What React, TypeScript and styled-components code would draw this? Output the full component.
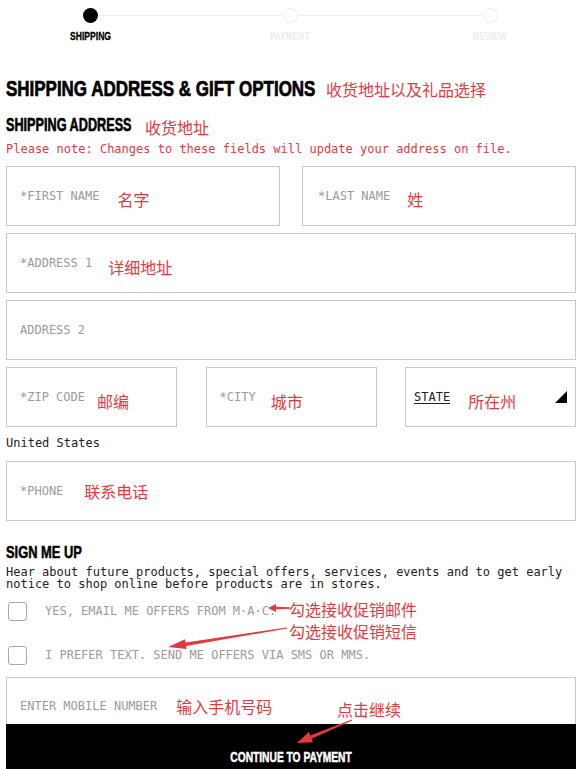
import React from "react";
import styled, { createGlobalStyle } from "styled-components";

const HEAD = `"Liberation Sans", Arial, sans-serif`;
const MONO = `"DejaVu Sans Mono", "Liberation Mono", monospace`;
const CJK = `"Noto Sans CJK SC", "Noto Sans", sans-serif`;
const RED = "#e23a3f";

const GlobalStyle = createGlobalStyle`
  html, body { margin: 0; padding: 0; background: #fff; }
  body { width: 586px; height: 769px; overflow: hidden; font-family: ${MONO}; }
  * { box-sizing: border-box; }
`;

const Page = styled.div`
  position: relative;
  width: 586px;
  height: 769px;
  overflow: hidden;
  padding: 8px 10px 0 6px;
`;

/* condensed heading text: the face is squeezed horizontally */
const Squeeze = styled.span<{ $s: number; $origin?: string; $stroke?: number }>`
  display: inline-block;
  white-space: nowrap;
  transform: scaleX(${(p) => p.$s});
  transform-origin: ${(p) => p.$origin ?? "left"} center;
  -webkit-text-stroke: ${(p) => p.$stroke ?? 0}px currentColor;
`;

/* ---------- stepper ---------- */
const Stepper = styled.div`
  position: relative;
  display: flex;
  gap: 120px;
  padding-left: 44px;
  &::before {
    content: "";
    position: absolute;
    top: 7px;
    left: 84px;
    width: 400px;
    height: 1px;
    background: #eeeeee;
  }
`;
const Step = styled.div`
  position: relative;
  width: 80px;
  display: flex;
  flex-direction: column;
  align-items: center;
  gap: 7px;
`;
const Dot = styled.div<{ $active?: boolean }>`
  width: 15px;
  height: 15px;
  border-radius: 50%;
  background: ${(p) => (p.$active ? "#000" : "#fff")};
  border: ${(p) => (p.$active ? "none" : "1.5px solid #ececec")};
`;
const StepLabel = styled.div<{ $active?: boolean; $w: number }>`
  width: ${(p) => p.$w}px;
  font-family: ${HEAD};
  font-weight: 700;
  font-size: 11px;
  line-height: 12px;
  color: ${(p) => (p.$active ? "#000" : "#ececec")};
`;

/* ---------- headings ---------- */
const TitleRow = styled.div`
  display: flex;
  align-items: baseline;
  margin-top: 34px;
`;
const Title = styled.h1`
  margin: 0;
  width: 310px;
  flex: none;
  font-family: ${HEAD};
  font-weight: 700;
  font-size: 22px;
  line-height: 26px;
  color: #000;
`;
const SubRow = styled.div`
  display: flex;
  align-items: flex-start;
  margin-top: 12px;
`;
const SubTitle = styled.h2`
  margin: 0;
  width: 126px;
  flex: none;
  font-family: ${HEAD};
  font-weight: 700;
  font-size: 18.5px;
  line-height: 22px;
  color: #000;
`;
const Anno = styled.span<{ $gap?: number; $dy?: number }>`
  margin-left: ${(p) => p.$gap ?? 0}px;
  font-family: ${CJK};
  font-weight: 400;
  font-size: 16px;
  line-height: 20px;
  color: ${RED};
  white-space: nowrap;
  transform: translateY(${(p) => p.$dy ?? 0}px);
`;
const NoteText = styled.p`
  margin: 6px 0 0;
  font-family: ${MONO};
  font-size: 12px;
  line-height: 14px;
  color: ${RED};
  white-space: nowrap;
`;

/* ---------- fields ---------- */
const Fields = styled.div`
  display: flex;
  flex-direction: column;
  gap: 7px;
  margin-top: 10px;
`;
const Grid = styled.div<{ $cols: number; $gap: number }>`
  display: grid;
  grid-template-columns: repeat(${(p) => p.$cols}, 1fr);
  column-gap: ${(p) => p.$gap}px;
`;
const Box = styled.div<{ $pl?: number }>`
  height: 60px;
  border: 1px solid #c9c9c9;
  display: flex;
  align-items: center;
  padding-left: ${(p) => p.$pl ?? 13}px;
  padding-right: 8px;
  background: #fff;
`;
const Placeholder = styled.span`
  font-family: ${MONO};
  font-size: 12px;
  line-height: 14px;
  color: #9b9b9b;
  white-space: pre;
`;
const SelectLabel = styled.span`
  font-family: ${MONO};
  font-size: 12px;
  line-height: 14px;
  color: #222;
  text-decoration: underline;
  text-underline-offset: 2px;
`;
const Caret = styled.svg`
  margin-left: auto;
  flex: none;
`;
const Country = styled.div`
  font-family: ${MONO};
  font-size: 12px;
  line-height: 14px;
  color: #222;
  margin: 2px 0 4px;
`;

/* ---------- sign up ---------- */
const SignTitle = styled.h2`
  margin: 21px 0 0;
  font-family: ${HEAD};
  font-weight: 700;
  font-size: 16.5px;
  line-height: 20px;
  color: #000;
`;
const Para = styled.p`
  margin: 4px 0 0;
  font-family: ${MONO};
  font-size: 12px;
  line-height: 12px;
  color: #222;
`;
const Options = styled.div`
  display: flex;
  flex-direction: column;
  gap: 24px;
  margin-top: 11px;
`;
const Option = styled.label`
  display: flex;
  align-items: center;
  height: 20px;
  padding-left: 2px;
`;
const Check = styled.span`
  width: 19px;
  height: 19px;
  border: 1px solid #a8a8a8;
  border-radius: 3px;
  flex: none;
`;
const OptionText = styled.span`
  margin-left: 18px;
  font-family: ${MONO};
  font-size: 12px;
  line-height: 14px;
  color: #9b9b9b;
  white-space: pre;
`;
const MobileBox = styled.div`
  margin-top: 12px;
  height: 47px;
  border: 1px solid #c9c9c9;
  border-bottom: none;
  display: flex;
  align-items: flex-start;
  padding: 21px 0 0 13px;
`;
const MobileAnno = styled(Anno)`
  transform: translateY(-3px);
`;
const Continue = styled.button`
  display: flex;
  width: 100%;
  height: 66px;
  border: none;
  background: #000;
  color: #fff;
  align-items: center;
  justify-content: center;
  font-family: ${HEAD};
  font-weight: 700;
  font-size: 15.5px;
  padding: 0;
`;

/* ---------- annotation overlay ---------- */
const Overlay = styled.svg`
  position: absolute;
  left: 0;
  top: 0;
  pointer-events: none;
`;
const FloatAnno = styled.span<{ $x: number; $y: number }>`
  position: absolute;
  left: ${(p) => p.$x}px;
  top: ${(p) => p.$y}px;
  font-family: ${CJK};
  font-size: 16px;
  line-height: 16px;
  color: ${RED};
  white-space: nowrap;
`;

function arrow(
  tx: number, ty: number, hx: number, hy: number,
  headLen: number, headW: number, shaftW: number, tailW: number
) {
  const dx = hx - tx;
  const dy = hy - ty;
  const len = Math.hypot(dx, dy);
  const ux = dx / len, uy = dy / len;
  const px = -uy, py = ux;
  const bx = hx - ux * headLen, by = hy - uy * headLen;
  const pts: [number, number][] = [
    [tx + (px * tailW) / 2, ty + (py * tailW) / 2],
    [bx + (px * shaftW) / 2, by + (py * shaftW) / 2],
    [bx + (px * headW) / 2, by + (py * headW) / 2],
    [hx, hy],
    [bx - (px * headW) / 2, by - (py * headW) / 2],
    [bx - (px * shaftW) / 2, by - (py * shaftW) / 2],
    [tx - (px * tailW) / 2, ty - (py * tailW) / 2],
  ];
  return pts.map((p) => p.map((v) => v.toFixed(1)).join(",")).join(" ");
}

export default function App() {
  return (
    <>
      <GlobalStyle />
      <Page>
        <Stepper>
          <Step>
            <Dot $active />
            <StepLabel $active $w={41}>
              <Squeeze $s={0.78} $stroke={0.3}>SHIPPING</Squeeze>
            </StepLabel>
          </Step>
          <Step>
            <Dot />
            <StepLabel $w={41}>
              <Squeeze $s={0.76}>PAYMENT</Squeeze>
            </StepLabel>
          </Step>
          <Step>
            <Dot />
            <StepLabel $w={34}>
              <Squeeze $s={0.78}>REVIEW</Squeeze>
            </StepLabel>
          </Step>
        </Stepper>

        <TitleRow>
          <Title>
            <Squeeze $s={0.771} $stroke={0.7}>SHIPPING ADDRESS &amp; GIFT OPTIONS</Squeeze>
          </Title>
          <Anno $gap={10}>收货地址以及礼品选择</Anno>
        </TitleRow>
        <SubRow>
          <SubTitle>
            <Squeeze $s={0.685} $stroke={0.6}>SHIPPING ADDRESS</Squeeze>
          </SubTitle>
          <Anno $gap={13} $dy={3}>收货地址</Anno>
        </SubRow>
        <NoteText>Please note: Changes to these fields will update your address on file.</NoteText>

        <Fields>
          <Grid $cols={2} $gap={22}>
            <Box>
              <Placeholder>*FIRST NAME</Placeholder>
              <Anno $gap={18} $dy={3}>名字</Anno>
            </Box>
            <Box $pl={15}>
              <Placeholder>*LAST NAME</Placeholder>
              <Anno $gap={17} $dy={3}>姓</Anno>
            </Box>
          </Grid>
          <Box>
            <Placeholder>*ADDRESS 1</Placeholder>
            <Anno $gap={16} $dy={4}>详细地址</Anno>
          </Box>
          <Box>
            <Placeholder>ADDRESS 2</Placeholder>
          </Box>
          <Grid $cols={3} $gap={28.5}>
            <Box>
              <Placeholder>*ZIP CODE</Placeholder>
              <Anno $gap={12} $dy={4}>邮编</Anno>
            </Box>
            <Box>
              <Placeholder>*CITY</Placeholder>
              <Anno $gap={15} $dy={4}>城市</Anno>
            </Box>
            <Box $pl={8}>
              <SelectLabel>STATE</SelectLabel>
              <Anno $gap={18} $dy={4}>所在州</Anno>
              <Caret width="12" height="12" viewBox="0 0 12 12">
                <polygon points="12,0 12,12 0,12" fill="#000" />
              </Caret>
            </Box>
          </Grid>
          <Country>United States</Country>
          <Box>
            <Placeholder>*PHONE</Placeholder>
            <Anno $gap={21} $dy={0}>联系电话</Anno>
          </Box>
        </Fields>

        <SignTitle>
          <Squeeze $s={0.78} $stroke={0.5}>SIGN ME UP</Squeeze>
        </SignTitle>
        <Para>
          Hear about future products, special offers, services, events and to get early notice to shop online before products are in stores.
        </Para>
        <Options>
          <Option>
            <Check />
            <OptionText>YES, EMAIL ME OFFERS FROM M·A·C.</OptionText>
          </Option>
          <Option>
            <Check />
            <OptionText>I PREFER TEXT. SEND ME OFFERS VIA SMS OR MMS.</OptionText>
          </Option>
        </Options>
        <MobileBox>
          <Placeholder>ENTER MOBILE NUMBER</Placeholder>
          <MobileAnno $gap={19}>输入手机号码</MobileAnno>
        </MobileBox>
        <Continue type="button">
          <Squeeze $s={0.66} $origin="center" $stroke={0.5}>CONTINUE TO PAYMENT</Squeeze>
        </Continue>

        <FloatAnno $x={289} $y={601}>勾选接收促销邮件</FloatAnno>
        <FloatAnno $x={289} $y={623}>勾选接收促销短信</FloatAnno>
        <FloatAnno $x={337} $y={701}>点击继续</FloatAnno>
        <Overlay width="586" height="769" viewBox="0 0 586 769">
          <polygon points={arrow(290, 608, 268, 608, 8, 8, 2.5, 1.5)} fill={RED} />
          <polygon points={arrow(287, 628, 168, 647, 18, 10, 3.5, 1)} fill={RED} />
          <polygon points={arrow(352, 720, 297, 743, 15, 11, 3.5, 1)} fill={RED} />
        </Overlay>
      </Page>
    </>
  );
}
